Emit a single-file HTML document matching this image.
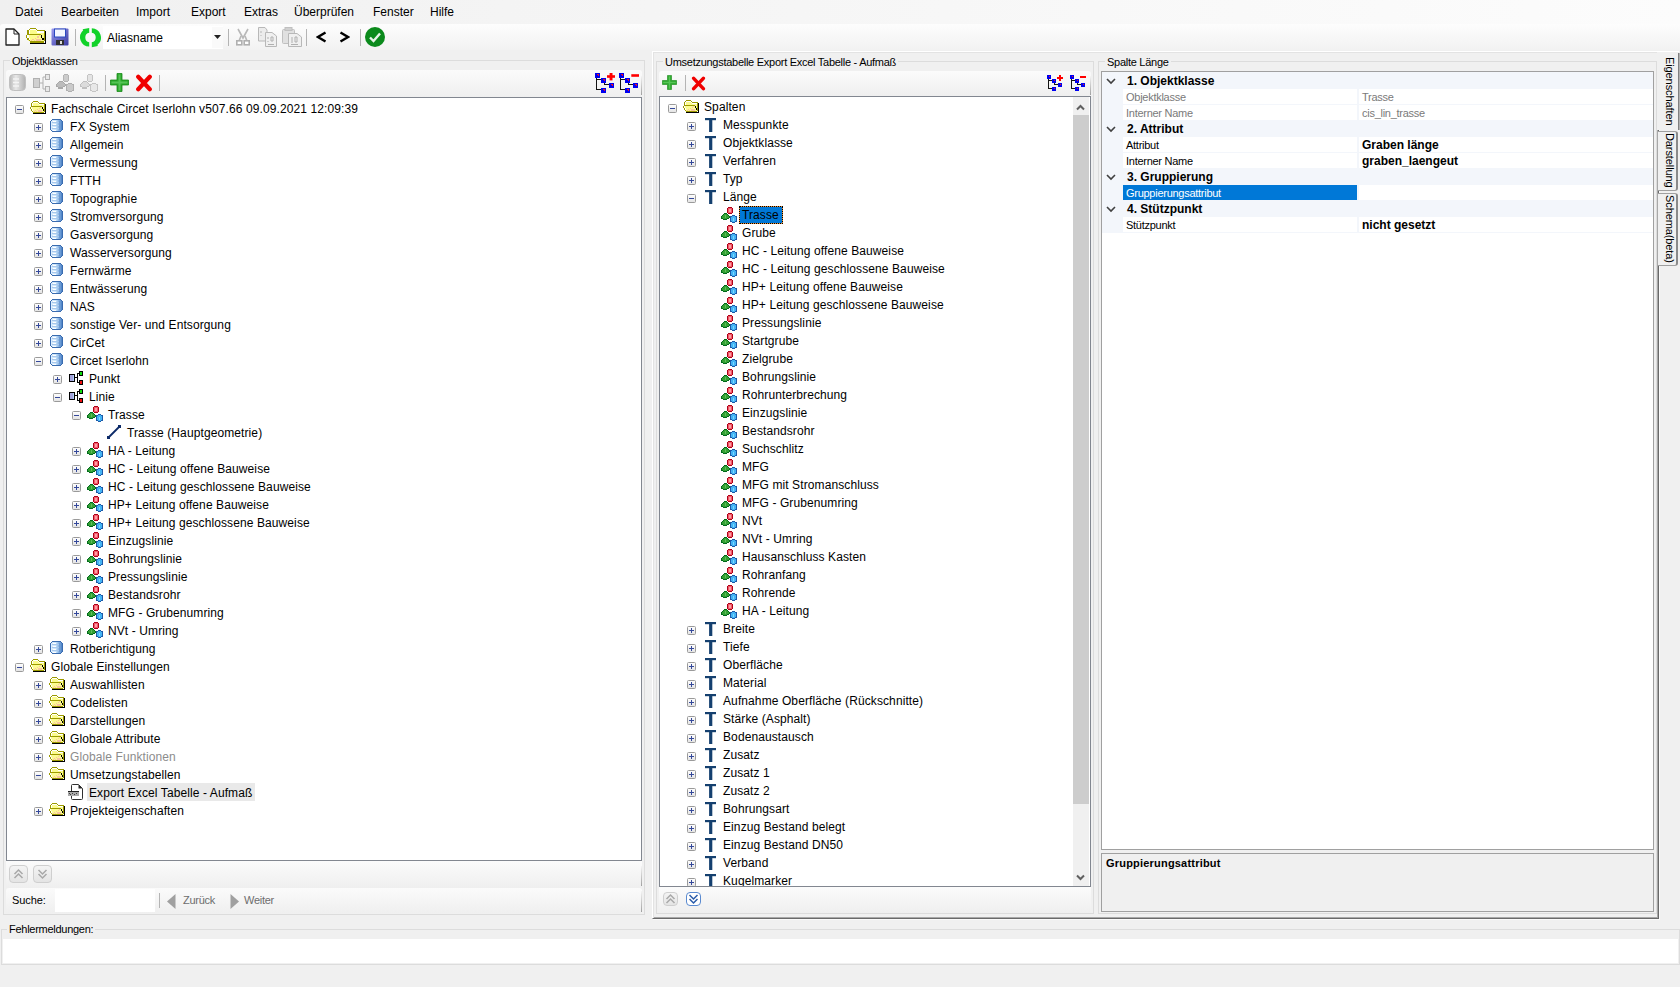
<!DOCTYPE html><html><head><meta charset="utf-8"><style>html,body{margin:0;padding:0;}body{width:1680px;height:987px;position:relative;overflow:hidden;background:#f0f0f0;font-family:'Liberation Sans',sans-serif;color:#000;font-size:12px;}.t{position:absolute;white-space:nowrap;line-height:16px;}.s{font-size:11px;letter-spacing:-0.27px;}.tr{letter-spacing:0.1px;}</style></head><body>
<svg width="0" height="0" style="position:absolute">
<defs>
<linearGradient id="gFold" x1="0" y1="0" x2="0" y2="1"><stop offset="0" stop-color="#fffbb0"/><stop offset="1" stop-color="#f0e060"/></linearGradient>
<linearGradient id="gDb" x1="0" y1="0" x2="1" y2="0"><stop offset="0" stop-color="#3c78c0"/><stop offset="0.35" stop-color="#e8f2ff"/><stop offset="0.7" stop-color="#7aa6d8"/><stop offset="1" stop-color="#3a70b8"/></linearGradient>
<linearGradient id="gExp" x1="0" y1="0" x2="0" y2="1"><stop offset="0" stop-color="#ffffff"/><stop offset="1" stop-color="#e2e2e2"/></linearGradient>
<symbol id="folder" viewBox="0 0 16 16" shape-rendering="crispEdges">
 <path d="M3 3H8V5H14V13H2V4H3Z" fill="#fbfb8c"/>
 <path d="M1 8H12V13H2Z" fill="#fcfc90"/>
 <path d="M3 3H8V4H3Z M2 4H3V7H2Z M9 5H14V6H9Z M1 8H2V10H1Z M2 10H3V12H2Z" fill="#ffffff"/>
 <path d="M7 10H8V11H7Z M9 9H10V10H9Z M5 11H6V12H5Z M8 11H12V13H8Z M10 8H11V9H10Z M4 12H5V13H4Z M6 12H7V13H6Z" fill="#f8c4a0"/>
 <path d="M3 2H8V3H3Z M2 3H3V4H2Z M8 3H9V4H8Z M1 4H2V7H1Z M9 4H15V5H9Z M14 5H15V13H14Z M1 7H12V8H1Z M0 8H1V10H0Z M1 10H2V12H1Z M2 12H3V13H2Z M3 13H14V14H3Z" fill="#9c9a00"/>
 <path d="M15 5H16V15H15Z M3 14H16V15H3Z M12 8H13V10H12Z M13 10H14V12H13Z" fill="#000"/>
</symbol>
<symbol id="db" viewBox="0 0 13 13" shape-rendering="crispEdges">
 <defs><linearGradient id="gDb2" x1="0" y1="0" x2="1" y2="0"><stop offset="0" stop-color="#dceeff"/><stop offset="0.45" stop-color="#c8e4fb"/><stop offset="0.7" stop-color="#8ab4e4"/><stop offset="1" stop-color="#4a80c4"/></linearGradient></defs>
 <path d="M2 0H11V1H12V2H13V11H12V12H11V13H2V12H1V11H0V2H1V1H2Z" fill="#3a6cb0"/>
 <path d="M2 1H11V2H12V11H11V12H2V11H1V2H2Z" fill="url(#gDb2)"/>
 <path d="M3 2H6V3H3Z M3 5H6V6H3Z M3 8H6V9H3Z M3 11H6V12H3Z" fill="#ffffff"/>
 <path d="M2 3H10V4H2Z M2 6H10V7H2Z M2 9H10V10H2Z" fill="#a8c8ec"/>
 <path d="M9 2H11V11H9Z" fill="#6a9ad4"/>
</symbol>
<symbol id="schema" viewBox="0 0 18 16" shape-rendering="crispEdges">
 <path d="M3 4H9V12H3Z" fill="#000"/><path d="M4 5H8V11H4Z" fill="#a4a4dc"/><path d="M7 5H8V11H7Z" fill="#b0d0f8"/>
 <path d="M9 7H11V8H9Z M11 3H12V13H11Z M12 3H13V4H12Z M12 12H13V13H12Z" fill="#000"/>
 <path d="M13 1H17V6H13Z M13 10H17V15H13Z" fill="#000"/>
 <path d="M14 2H16V5H14Z" fill="#10e010"/><path d="M14 11H16V14H14Z" fill="#f01010"/>
</symbol>
<symbol id="objc" viewBox="0 0 17 17" shape-rendering="crispEdges">
 <path d="M7 0H11V1H12V6H11V7H7V6H6V1H7Z" fill="#b00018"/>
 <path d="M7 1H11V6H7Z" fill="#f05a68"/><path d="M8 2H10V5H8Z" fill="#ff9ca4"/>
 <path d="M3 6H6V7H7V8H8V9H9V10H10V11H8V12H6V13H2V12H0V9H1V8H2V7H3Z" fill="#006a1c"/>
 <path d="M3 7H6V8H7V9H8V11H6V12H2V11H1V9H2V8H3Z" fill="#34a034"/><path d="M4 8H5V11H4Z" fill="#5cc05c"/>
 <path d="M11 8H14V9H16V15H14V16H11V15H9V9H11Z" fill="#1e5aa8"/>
 <path d="M11 9H14V10H15V14H14V15H11V14H10V10H11Z" fill="#44b4f4"/><path d="M12 11H13V14H12Z" fill="#80d8ff"/>
</symbol>
<symbol id="objg" viewBox="0 0 17 17" shape-rendering="crispEdges">
 <path d="M7 0H11V1H12V6H11V7H7V6H6V1H7Z" fill="#b4b4b4"/>
 <path d="M7 1H11V6H7Z" fill="#cccccc"/>
 <path d="M3 6H6V7H7V8H8V9H9V10H10V11H8V12H6V13H2V12H0V9H1V8H2V7H3Z" fill="#a8a8a8"/>
 <path d="M3 7H6V8H7V9H8V11H6V12H2V11H1V9H2V8H3Z" fill="#bcbcbc"/>
 <path d="M11 8H14V9H16V15H14V16H11V15H9V9H11Z" fill="#b0b0b0"/>
 <path d="M11 9H14V10H15V14H14V15H11V14H10V10H11Z" fill="#cacaca"/>
</symbol>
<symbol id="objg2" viewBox="0 0 17 17" shape-rendering="crispEdges">
 <path d="M7 0H11V1H12V6H11V7H7V6H6V1H7Z" fill="#c4c4c4"/>
 <path d="M7 1H11V6H7Z" fill="#e4e4e4"/>
 <path d="M3 6H6V7H7V8H8V9H9V10H10V11H8V12H6V13H2V12H0V9H1V8H2V7H3Z" fill="#c0c0c0"/>
 <path d="M3 7H6V8H7V9H8V11H6V12H2V11H1V9H2V8H3Z" fill="#dcdcdc"/>
 <path d="M11 8H14V9H16V15H14V16H11V15H9V9H11Z" fill="#c4c4c4"/>
 <path d="M11 9H14V10H15V14H14V15H11V14H10V10H11Z" fill="#e8e8e8"/>
</symbol>
<symbol id="line" viewBox="0 0 20 20">
 <path d="M4.5 14.5 L15.5 3.5" stroke="#0c2a68" stroke-width="1.8"/>
 <rect x="3" y="13" width="3" height="3" fill="#0c2a68"/><rect x="14" y="2" width="3" height="3" fill="#0c2a68"/>
</symbol>
<symbol id="doc" viewBox="0 0 22 20">
 <path d="M8.5 2.5 H14.5 L18.5 6.5 V16.5 Q18.5 17.5 17.5 17.5 H8.5 Q7.5 17.5 7.5 16.5 V3.5 Q7.5 2.5 8.5 2.5Z" fill="#fff" stroke="#303030" stroke-width="1"/>
 <path d="M14.5 2.5 V6.5 H18.5 Z" fill="#2a2a2a"/>
 <rect x="4" y="9" width="11" height="5" fill="#a8a8a8"/><rect x="4" y="9" width="11" height="1" fill="#202020"/>
 <path d="M5 11H6V12H5Z M8 11H9V12H8Z M10 12H11V13H10Z M6 12H7V13H6Z M12 11H13V12H12Z" fill="#404040"/>
</symbol>
<symbol id="ticon" viewBox="0 0 12 14">
 <rect x="0" y="0" width="11" height="2.2" fill="#15406f"/><rect x="4.1" y="0" width="3.2" height="14" fill="#15406f"/>
</symbol>
<symbol id="plus" viewBox="0 0 9 9">
 <rect x="0.5" y="0.5" width="8" height="8" rx="1" fill="url(#gExp)" stroke="#9a9a9a"/>
 <path d="M2 4.5 H7 M4.5 2 V7" stroke="#34489a" stroke-width="1"/>
</symbol>
<symbol id="minus" viewBox="0 0 9 9">
 <rect x="0.5" y="0.5" width="8" height="8" rx="1" fill="url(#gExp)" stroke="#9a9a9a"/>
 <path d="M2 4.5 H7" stroke="#34489a" stroke-width="1"/>
</symbol>
<symbol id="doc" viewBox="0 0 16 16">
 <path d="M3.5 1.5 H10 L13.5 5 V14.5 H3.5 Z" fill="#fff" stroke="#303030"/>
 <path d="M10 1.5 V5 H13.5" fill="none" stroke="#303030"/>
 <rect x="1" y="7" width="10" height="4" fill="#909090"/>
</symbol>
</defs>
</svg>
<div style="position:absolute;left:0px;top:0px;width:1680px;height:24px;background:linear-gradient(to right,#f0f0f0,#f4f4f4 30%,#fcfcfc);"></div><div class="t" style="left:15px;top:4px;font-size:12px;">Datei</div><div class="t" style="left:61px;top:4px;font-size:12px;">Bearbeiten</div><div class="t" style="left:136px;top:4px;font-size:12px;">Import</div><div class="t" style="left:191px;top:4px;font-size:12px;">Export</div><div class="t" style="left:244px;top:4px;font-size:12px;">Extras</div><div class="t" style="left:294px;top:4px;font-size:12px;">Überprüfen</div><div class="t" style="left:373px;top:4px;font-size:12px;">Fenster</div><div class="t" style="left:430px;top:4px;font-size:12px;">Hilfe</div><div style="position:absolute;left:0px;top:24px;width:1680px;height:26px;background:linear-gradient(#fdfdfd,#f2f2f2);border-radius:3px 0 0 0;"></div><div style="position:absolute;left:652px;top:51px;width:1007px;height:868px;box-sizing:border-box;border-top:1px solid #fff;border-left:1px solid #fff;border-right:1px solid #6a6a6a;border-bottom:1px solid #6a6a6a;box-shadow:inset 1px 1px 0 #e3e3e3, inset -1px -1px 0 #a8a8a8, 1px 1px 0 #fafafa;"></div><div style="position:absolute;left:3px;top:60px;width:642px;height:855px;box-sizing:border-box;border:1px solid #dcdcdc;"></div><div class="t s" style="left:10px;top:53px;padding:0 2px;background:#f0f0f0;">Objektklassen</div><div style="position:absolute;left:656px;top:61px;width:438px;height:853px;box-sizing:border-box;border:1px solid #dcdcdc;"></div><div class="t s" style="left:663px;top:54px;padding:0 2px;background:#f0f0f0;">Umsetzungstabelle Export Excel Tabelle - Aufmaß</div><div style="position:absolute;left:1098px;top:61px;width:559px;height:853px;box-sizing:border-box;border:1px solid #dcdcdc;"></div><div class="t s" style="left:1105px;top:54px;padding:0 2px;background:#f0f0f0;">Spalte Länge</div><div style="position:absolute;left:6px;top:70px;width:636px;height:27px;background:linear-gradient(#fbfbfb,#efefef);border-radius:3px 3px 0 0;"></div><div style="position:absolute;left:641px;top:76px;width:1px;height:19px;background:linear-gradient(#f4f4f4,#a0a0a0);"></div><div style="position:absolute;left:6px;top:97px;width:636px;height:764px;box-sizing:border-box;border:1px solid #828790;background:#fff;"></div><div style="position:absolute;left:6px;top:861px;width:636px;height:27px;background:linear-gradient(#fbfbfb,#efefef);"></div><div style="position:absolute;left:641px;top:866px;width:1px;height:20px;background:linear-gradient(#f4f4f4,#a0a0a0);"></div><div style="position:absolute;left:6px;top:888px;width:636px;height:25px;background:linear-gradient(#fbfbfb,#efefef);border-radius:3px 3px 0 0;"></div><div style="position:absolute;left:55px;top:889px;width:100px;height:23px;background:#fff;"></div><div style="position:absolute;left:641px;top:891px;width:1px;height:21px;background:linear-gradient(#f4f4f4,#a0a0a0);"></div><div style="position:absolute;left:659px;top:71px;width:432px;height:25px;background:linear-gradient(#fbfbfb,#efefef);border-radius:3px 3px 0 0;"></div><div style="position:absolute;left:1090px;top:76px;width:1px;height:19px;background:linear-gradient(#f4f4f4,#a0a0a0);"></div><div style="position:absolute;left:659px;top:96px;width:432px;height:791px;box-sizing:border-box;border:1px solid #828790;background:#fff;"></div><div style="position:absolute;left:659px;top:887px;width:432px;height:26px;background:linear-gradient(#fbfbfb,#efefef);"></div><div style="position:absolute;left:1073px;top:97px;width:16px;height:789px;background:#f0f0f0;"></div><div style="position:absolute;left:1073px;top:115px;width:16px;height:689px;background:#cdcdcd;"></div><div style="position:absolute;left:1101px;top:71px;width:553px;height:779px;box-sizing:border-box;border:1px solid #a0a0a0;background:#fff;"></div><div style="position:absolute;left:1101px;top:853px;width:553px;height:59px;box-sizing:border-box;border:1px solid #a0a0a0;background:#f0f0f0;"></div><div class="t" style="left:1106px;top:855px;font-size:11px;font-weight:bold;letter-spacing:0.2px;">Gruppierungsattribut</div><div style="position:absolute;left:1px;top:929px;width:1679px;height:36px;box-sizing:border-box;border:1px solid #dcdcdc;"></div><div class="t s" style="left:7px;top:921px;padding:0 2px;background:#f0f0f0;">Fehlermeldungen:</div><div style="position:absolute;left:3px;top:939px;width:1675px;height:24px;background:#fff;"></div><svg style="position:absolute;left:5px;top:28px" width="15" height="18" viewBox="0 0 15 18"><path d="M1 1 H9 L14 6 V17 H1 Z" fill="#fff" stroke="#202020" stroke-width="1.3" stroke-linejoin="round"/><path d="M9 1 V6 H14" fill="none" stroke="#202020" stroke-width="1"/></svg><svg style="position:absolute;left:26px;top:25px;" width="20" height="20" viewBox="0 0 20 20"><use href="#folder"/></svg><svg style="position:absolute;left:51px;top:28px" width="18" height="18" viewBox="0 0 18 18"><defs><linearGradient id="gSave" x1="0" y1="0" x2="1" y2="1"><stop offset="0" stop-color="#9a9af0"/><stop offset="1" stop-color="#3a3aa0"/></linearGradient></defs><rect x="0.5" y="0.5" width="17" height="17" rx="1" fill="url(#gSave)"/><rect x="3.5" y="1" width="11" height="8" fill="#f4f6ff" stroke="#2a48c0"/><rect x="5" y="12" width="8" height="5" fill="#303030"/><rect x="9" y="13" width="2" height="3" fill="#ddd"/></svg><div style="position:absolute;left:75px;top:29px;width:1px;height:17px;background:#b4b4b4;"></div><svg style="position:absolute;left:78px;top:25px" width="24" height="24" viewBox="0 0 24 24"><g fill="#12d22a"><path d="M11.2 3 V7.7 A4.9 4.9 0 0 0 11.2 17.3 V21.6 A9.4 9.4 0 0 1 5.2 5.2 L4.6 4.2 Z"/><path d="M13.8 3.3 A9.3 9.3 0 0 1 19.5 19.8 L19.8 21 L13.8 22.2 V17.3 A4.9 4.9 0 0 0 13.8 7.7 Z"/></g></svg><div style="position:absolute;left:103px;top:26px;width:120px;height:23px;background:#fff;"></div><div style="position:absolute;left:212px;top:27px;width:11px;height:21px;background:#fafafa;"></div><svg style="position:absolute;left:214px;top:35px" width="7" height="4" viewBox="0 0 7 4"><path d="M0 0 H7 L3.5 4 Z" fill="#222"/></svg><div class="t" style="left:107px;top:30px;">Aliasname</div><div style="position:absolute;left:228px;top:29px;width:1px;height:17px;background:#b4b4b4;"></div><svg style="position:absolute;left:236px;top:28px" width="14" height="18" viewBox="0 0 14 18"><path d="M2 1 L7 10 L12 1" fill="none" stroke="#b8b8b8" stroke-width="1.6"/><path d="M5 8 L3 13 M9 8 L11 13" stroke="#b8b8b8" stroke-width="1.6"/><rect x="0.8" y="12.8" width="5" height="4" fill="#fff" stroke="#b0b0b0" stroke-width="1.6"/><rect x="8.2" y="12.8" width="5" height="4" fill="#fff" stroke="#b0b0b0" stroke-width="1.6"/></svg><svg style="position:absolute;left:258px;top:27px" width="19" height="20" viewBox="0 0 19 20"><path d="M0.5 0.5 H7 L9 3 V14 H0.5 Z" fill="#ececec" stroke="#b8b8b8"/><path d="M7.5 5.5 H14 L18.5 9 V19.5 H7.5 Z" fill="#f0f0f0" stroke="#b8b8b8"/><path d="M10 10 V12 M10 14 V15 M13 10 H15 V14 H13 Z M10 17.5 H16" stroke="#b0b0b0" fill="none"/><path d="M3 4 V6 M3 8 V9" stroke="#b8b8b8"/></svg><svg style="position:absolute;left:282px;top:27px" width="20" height="20" viewBox="0 0 20 20"><rect x="0.5" y="2.5" width="12" height="14" rx="1" fill="#e0e0e0" stroke="#c0c0c0"/><rect x="3" y="0.5" width="7" height="3" fill="#d0d0d0" stroke="#c0c0c0"/><path d="M6.5 6.5 H15 L19.5 10 V19.5 H6.5 Z" fill="#f0f0f0" stroke="#b8b8b8"/><path d="M9 11 H11 M9 13 H11 M9 15 H11 M13 10 H15 V15 H13 Z M9 17.5 H16" stroke="#b0b0b0" fill="none"/></svg><div style="position:absolute;left:306px;top:29px;width:1px;height:17px;background:#b4b4b4;"></div><svg style="position:absolute;left:316px;top:31px" width="11" height="12" viewBox="0 0 11 12"><path d="M9.5 1.5 L2 6 L9.5 10.5" fill="none" stroke="#000" stroke-width="2.4" stroke-linejoin="miter"/></svg><svg style="position:absolute;left:339px;top:31px" width="11" height="12" viewBox="0 0 11 12"><path d="M1.5 1.5 L9 6 L1.5 10.5" fill="none" stroke="#000" stroke-width="2.4" stroke-linejoin="miter"/></svg><div style="position:absolute;left:360px;top:29px;width:1px;height:17px;background:#b4b4b4;"></div><svg style="position:absolute;left:364px;top:26px" width="22" height="22" viewBox="0 0 22 22"><circle cx="11" cy="11" r="10" fill="#0b8a1c"/><path d="M6 11.5 L9.5 15 L16 7.5" fill="none" stroke="#e8f4e8" stroke-width="2.4"/></svg><svg style="position:absolute;left:9px;top:74px" width="17" height="17" viewBox="0 0 17 17"><defs><linearGradient id="gGdb" x1="0" y1="0" x2="1" y2="0"><stop offset="0" stop-color="#b8b8b8"/><stop offset="0.4" stop-color="#e8e8e8"/><stop offset="1" stop-color="#b0b0b0"/></linearGradient></defs><rect x="0.5" y="0.5" width="16" height="16" rx="4" fill="url(#gGdb)" stroke="#c0c0c0"/><path d="M4 5 H10 M4 8.5 H10 M4 12 H10" stroke="#f4f4f4" stroke-width="1.3"/></svg><svg style="position:absolute;left:33px;top:74px" width="18" height="18" viewBox="0 0 18 18"><rect x="0.5" y="4.5" width="6" height="9" fill="#d0d0d0" stroke="#b0b0b0"/><path d="M6.5 9 H10 M10 3 V15 M10 3 H13 M10 15 H13" stroke="#b0b0b0" fill="none"/><rect x="12.5" y="0.5" width="4" height="5" fill="#e8e8e8" stroke="#b0b0b0"/><rect x="12.5" y="12.5" width="4" height="5" fill="#e8e8e8" stroke="#b0b0b0"/></svg><svg style="position:absolute;left:56px;top:74px;" width="19" height="19" viewBox="0 0 19 19"><use href="#objg"/></svg><svg style="position:absolute;left:80px;top:74px;" width="19" height="19" viewBox="0 0 19 19"><use href="#objg2"/></svg><div style="position:absolute;left:105px;top:75px;width:1px;height:16px;background:#b4b4b4;"></div><svg style="position:absolute;left:110px;top:73px" width="19" height="19" viewBox="0 0 19 19"><path d="M7 0.5 H12 V7 H18.5 V12 H12 V18.5 H7 V12 H0.5 V7 H7 Z" fill="#2aa82a" stroke="#1a8a1a" stroke-width="0.8"/><path d="M8.5 1.5 H10.5 V8.5 H17.5 V10.5 H10.5 V17.5 H8.5 V10.5 H1.5 V8.5 H8.5 Z" fill="#7ad87a" opacity="0.55"/></svg><svg style="position:absolute;left:135px;top:74px" width="18" height="18" viewBox="0 0 18 18"><path d="M3.2 2.8 L14.8 15.2 M14.8 2.8 L3.2 15.2" stroke="#f00000" stroke-width="4.2" stroke-linecap="round"/></svg><div style="position:absolute;left:159px;top:75px;width:1px;height:16px;background:#b4b4b4;"></div><svg style="position:absolute;left:595px;top:73px" width="20" height="20" viewBox="0 0 20 20"><g shape-rendering="crispEdges"><path d="M1 5H2V17H1Z M2 6H6V7H2Z M2 16H6V17H2Z M9 10H10V12H9Z M10 11H14V12H10Z" fill="#141414"/><rect x="0" y="0" width="5" height="5" fill="#0000f0"/><path d="M1 1H4V4Z" fill="#e8102a"/><rect x="6" y="5" width="5" height="5" fill="#0000f0"/><path d="M7 6H10V9Z" fill="#e8102a"/><rect x="14" y="10" width="5" height="5" fill="#0000f0"/><path d="M15 11H18V14Z" fill="#e8102a"/><rect x="6" y="15" width="5" height="5" fill="#0000f0"/><path d="M7 16H10V19Z" fill="#e8102a"/></g><rect x="12" y="2.2" width="8" height="2.6" fill="#ff0000"/><rect x="14.6" y="0" width="2.9" height="7.4" fill="#ff0000"/></svg><svg style="position:absolute;left:619px;top:73px" width="20" height="20" viewBox="0 0 20 20"><g shape-rendering="crispEdges"><path d="M1 5H2V17H1Z M2 6H6V7H2Z M2 16H6V17H2Z M9 10H10V12H9Z M10 11H14V12H10Z" fill="#141414"/><rect x="0" y="0" width="5" height="5" fill="#0000f0"/><path d="M1 1H4V4Z" fill="#e8102a"/><rect x="6" y="5" width="5" height="5" fill="#0000f0"/><path d="M7 6H10V9Z" fill="#e8102a"/><rect x="14" y="10" width="5" height="5" fill="#0000f0"/><path d="M15 11H18V14Z" fill="#e8102a"/><rect x="6" y="15" width="5" height="5" fill="#0000f0"/><path d="M7 16H10V19Z" fill="#e8102a"/></g><rect x="12.3" y="1.2" width="7.7" height="2.6" fill="#ff0000"/></svg><svg style="position:absolute;left:662px;top:75px" width="15" height="15" viewBox="0 0 19 19"><path d="M7 0.5 H12 V7 H18.5 V12 H12 V18.5 H7 V12 H0.5 V7 H7 Z" fill="#2aa82a" stroke="#1a8a1a" stroke-width="0.8"/><path d="M8.5 1.5 H10.5 V8.5 H17.5 V10.5 H10.5 V17.5 H8.5 V10.5 H1.5 V8.5 H8.5 Z" fill="#7ad87a" opacity="0.55"/></svg><div style="position:absolute;left:685px;top:75px;width:1px;height:16px;background:#b4b4b4;"></div><svg style="position:absolute;left:691px;top:76px" width="15" height="15" viewBox="0 0 18 18"><path d="M3.2 2.8 L14.8 15.2 M14.8 2.8 L3.2 15.2" stroke="#f00000" stroke-width="4.2" stroke-linecap="round"/></svg><svg style="position:absolute;left:1047px;top:75px" width="16" height="16" viewBox="0 0 16 16"><g shape-rendering="crispEdges"><path d="M1 4H2V14H1Z M2 5H5V6H2Z M2 13H5V14H2Z M7 8H8V10H7Z M8 9H11V10H8Z" fill="#141414"/><rect x="0" y="0" width="4" height="4" fill="#0000f0"/><path d="M1 1H3V3Z" fill="#e8102a"/><rect x="5" y="4" width="4" height="4" fill="#0000f0"/><path d="M6 5H8V7Z" fill="#e8102a"/><rect x="11" y="8" width="4" height="4" fill="#0000f0"/><path d="M12 9H14V11Z" fill="#e8102a"/><rect x="5" y="12" width="4" height="4" fill="#0000f0"/><path d="M6 13H8V15Z" fill="#e8102a"/><rect x="10" y="2" width="6" height="2" fill="#ff0000"/><rect x="12" y="0" width="2" height="6" fill="#ff0000"/></g></svg><svg style="position:absolute;left:1070px;top:75px" width="16" height="16" viewBox="0 0 16 16"><g shape-rendering="crispEdges"><path d="M1 4H2V14H1Z M2 5H5V6H2Z M2 13H5V14H2Z M7 8H8V10H7Z M8 9H11V10H8Z" fill="#141414"/><rect x="0" y="0" width="4" height="4" fill="#0000f0"/><path d="M1 1H3V3Z" fill="#e8102a"/><rect x="5" y="4" width="4" height="4" fill="#0000f0"/><path d="M6 5H8V7Z" fill="#e8102a"/><rect x="11" y="8" width="4" height="4" fill="#0000f0"/><path d="M12 9H14V11Z" fill="#e8102a"/><rect x="5" y="12" width="4" height="4" fill="#0000f0"/><path d="M6 13H8V15Z" fill="#e8102a"/><rect x="10" y="1" width="6" height="2" fill="#ff0000"/></g></svg><svg style="position:absolute;left:15px;top:105px;" width="9" height="9" viewBox="0 0 9 9"><use href="#minus"/></svg><svg style="position:absolute;left:30px;top:99px;" width="16" height="16" viewBox="0 0 16 16"><use href="#folder"/></svg><div class="t tr" style="left:51px;top:101px;">Fachschale Circet Iserlohn v507.66 09.09.2021 12:09:39</div><svg style="position:absolute;left:34px;top:123px;" width="9" height="9" viewBox="0 0 9 9"><use href="#plus"/></svg><svg style="position:absolute;left:50px;top:119px;" width="13" height="13" viewBox="0 0 13 13"><use href="#db"/></svg><div class="t tr" style="left:70px;top:119px;">FX System</div><svg style="position:absolute;left:34px;top:141px;" width="9" height="9" viewBox="0 0 9 9"><use href="#plus"/></svg><svg style="position:absolute;left:50px;top:137px;" width="13" height="13" viewBox="0 0 13 13"><use href="#db"/></svg><div class="t tr" style="left:70px;top:137px;">Allgemein</div><svg style="position:absolute;left:34px;top:159px;" width="9" height="9" viewBox="0 0 9 9"><use href="#plus"/></svg><svg style="position:absolute;left:50px;top:155px;" width="13" height="13" viewBox="0 0 13 13"><use href="#db"/></svg><div class="t tr" style="left:70px;top:155px;">Vermessung</div><svg style="position:absolute;left:34px;top:177px;" width="9" height="9" viewBox="0 0 9 9"><use href="#plus"/></svg><svg style="position:absolute;left:50px;top:173px;" width="13" height="13" viewBox="0 0 13 13"><use href="#db"/></svg><div class="t tr" style="left:70px;top:173px;">FTTH</div><svg style="position:absolute;left:34px;top:195px;" width="9" height="9" viewBox="0 0 9 9"><use href="#plus"/></svg><svg style="position:absolute;left:50px;top:191px;" width="13" height="13" viewBox="0 0 13 13"><use href="#db"/></svg><div class="t tr" style="left:70px;top:191px;">Topographie</div><svg style="position:absolute;left:34px;top:213px;" width="9" height="9" viewBox="0 0 9 9"><use href="#plus"/></svg><svg style="position:absolute;left:50px;top:209px;" width="13" height="13" viewBox="0 0 13 13"><use href="#db"/></svg><div class="t tr" style="left:70px;top:209px;">Stromversorgung</div><svg style="position:absolute;left:34px;top:231px;" width="9" height="9" viewBox="0 0 9 9"><use href="#plus"/></svg><svg style="position:absolute;left:50px;top:227px;" width="13" height="13" viewBox="0 0 13 13"><use href="#db"/></svg><div class="t tr" style="left:70px;top:227px;">Gasversorgung</div><svg style="position:absolute;left:34px;top:249px;" width="9" height="9" viewBox="0 0 9 9"><use href="#plus"/></svg><svg style="position:absolute;left:50px;top:245px;" width="13" height="13" viewBox="0 0 13 13"><use href="#db"/></svg><div class="t tr" style="left:70px;top:245px;">Wasserversorgung</div><svg style="position:absolute;left:34px;top:267px;" width="9" height="9" viewBox="0 0 9 9"><use href="#plus"/></svg><svg style="position:absolute;left:50px;top:263px;" width="13" height="13" viewBox="0 0 13 13"><use href="#db"/></svg><div class="t tr" style="left:70px;top:263px;">Fernwärme</div><svg style="position:absolute;left:34px;top:285px;" width="9" height="9" viewBox="0 0 9 9"><use href="#plus"/></svg><svg style="position:absolute;left:50px;top:281px;" width="13" height="13" viewBox="0 0 13 13"><use href="#db"/></svg><div class="t tr" style="left:70px;top:281px;">Entwässerung</div><svg style="position:absolute;left:34px;top:303px;" width="9" height="9" viewBox="0 0 9 9"><use href="#plus"/></svg><svg style="position:absolute;left:50px;top:299px;" width="13" height="13" viewBox="0 0 13 13"><use href="#db"/></svg><div class="t tr" style="left:70px;top:299px;">NAS</div><svg style="position:absolute;left:34px;top:321px;" width="9" height="9" viewBox="0 0 9 9"><use href="#plus"/></svg><svg style="position:absolute;left:50px;top:317px;" width="13" height="13" viewBox="0 0 13 13"><use href="#db"/></svg><div class="t tr" style="left:70px;top:317px;">sonstige Ver- und Entsorgung</div><svg style="position:absolute;left:34px;top:339px;" width="9" height="9" viewBox="0 0 9 9"><use href="#plus"/></svg><svg style="position:absolute;left:50px;top:335px;" width="13" height="13" viewBox="0 0 13 13"><use href="#db"/></svg><div class="t tr" style="left:70px;top:335px;">CirCet</div><svg style="position:absolute;left:34px;top:357px;" width="9" height="9" viewBox="0 0 9 9"><use href="#minus"/></svg><svg style="position:absolute;left:50px;top:353px;" width="13" height="13" viewBox="0 0 13 13"><use href="#db"/></svg><div class="t tr" style="left:70px;top:353px;">Circet Iserlohn</div><svg style="position:absolute;left:53px;top:375px;" width="9" height="9" viewBox="0 0 9 9"><use href="#plus"/></svg><svg style="position:absolute;left:66px;top:370px;" width="18" height="16" viewBox="0 0 18 16"><use href="#schema"/></svg><div class="t tr" style="left:89px;top:371px;">Punkt</div><svg style="position:absolute;left:53px;top:393px;" width="9" height="9" viewBox="0 0 9 9"><use href="#minus"/></svg><svg style="position:absolute;left:66px;top:388px;" width="18" height="16" viewBox="0 0 18 16"><use href="#schema"/></svg><div class="t tr" style="left:89px;top:389px;">Linie</div><svg style="position:absolute;left:72px;top:411px;" width="9" height="9" viewBox="0 0 9 9"><use href="#minus"/></svg><svg style="position:absolute;left:87px;top:406px;" width="17" height="17" viewBox="0 0 17 17"><use href="#objc"/></svg><div class="t tr" style="left:108px;top:407px;">Trasse</div><svg style="position:absolute;left:104px;top:423px;" width="20" height="20" viewBox="0 0 20 20"><use href="#line"/></svg><div class="t tr" style="left:127px;top:425px;">Trasse (Hauptgeometrie)</div><svg style="position:absolute;left:72px;top:447px;" width="9" height="9" viewBox="0 0 9 9"><use href="#plus"/></svg><svg style="position:absolute;left:87px;top:442px;" width="17" height="17" viewBox="0 0 17 17"><use href="#objc"/></svg><div class="t tr" style="left:108px;top:443px;">HA - Leitung</div><svg style="position:absolute;left:72px;top:465px;" width="9" height="9" viewBox="0 0 9 9"><use href="#plus"/></svg><svg style="position:absolute;left:87px;top:460px;" width="17" height="17" viewBox="0 0 17 17"><use href="#objc"/></svg><div class="t tr" style="left:108px;top:461px;">HC - Leitung offene Bauweise</div><svg style="position:absolute;left:72px;top:483px;" width="9" height="9" viewBox="0 0 9 9"><use href="#plus"/></svg><svg style="position:absolute;left:87px;top:478px;" width="17" height="17" viewBox="0 0 17 17"><use href="#objc"/></svg><div class="t tr" style="left:108px;top:479px;">HC - Leitung geschlossene Bauweise</div><svg style="position:absolute;left:72px;top:501px;" width="9" height="9" viewBox="0 0 9 9"><use href="#plus"/></svg><svg style="position:absolute;left:87px;top:496px;" width="17" height="17" viewBox="0 0 17 17"><use href="#objc"/></svg><div class="t tr" style="left:108px;top:497px;">HP+ Leitung offene Bauweise</div><svg style="position:absolute;left:72px;top:519px;" width="9" height="9" viewBox="0 0 9 9"><use href="#plus"/></svg><svg style="position:absolute;left:87px;top:514px;" width="17" height="17" viewBox="0 0 17 17"><use href="#objc"/></svg><div class="t tr" style="left:108px;top:515px;">HP+ Leitung geschlossene Bauweise</div><svg style="position:absolute;left:72px;top:537px;" width="9" height="9" viewBox="0 0 9 9"><use href="#plus"/></svg><svg style="position:absolute;left:87px;top:532px;" width="17" height="17" viewBox="0 0 17 17"><use href="#objc"/></svg><div class="t tr" style="left:108px;top:533px;">Einzugslinie</div><svg style="position:absolute;left:72px;top:555px;" width="9" height="9" viewBox="0 0 9 9"><use href="#plus"/></svg><svg style="position:absolute;left:87px;top:550px;" width="17" height="17" viewBox="0 0 17 17"><use href="#objc"/></svg><div class="t tr" style="left:108px;top:551px;">Bohrungslinie</div><svg style="position:absolute;left:72px;top:573px;" width="9" height="9" viewBox="0 0 9 9"><use href="#plus"/></svg><svg style="position:absolute;left:87px;top:568px;" width="17" height="17" viewBox="0 0 17 17"><use href="#objc"/></svg><div class="t tr" style="left:108px;top:569px;">Pressungslinie</div><svg style="position:absolute;left:72px;top:591px;" width="9" height="9" viewBox="0 0 9 9"><use href="#plus"/></svg><svg style="position:absolute;left:87px;top:586px;" width="17" height="17" viewBox="0 0 17 17"><use href="#objc"/></svg><div class="t tr" style="left:108px;top:587px;">Bestandsrohr</div><svg style="position:absolute;left:72px;top:609px;" width="9" height="9" viewBox="0 0 9 9"><use href="#plus"/></svg><svg style="position:absolute;left:87px;top:604px;" width="17" height="17" viewBox="0 0 17 17"><use href="#objc"/></svg><div class="t tr" style="left:108px;top:605px;">MFG - Grubenumring</div><svg style="position:absolute;left:72px;top:627px;" width="9" height="9" viewBox="0 0 9 9"><use href="#plus"/></svg><svg style="position:absolute;left:87px;top:622px;" width="17" height="17" viewBox="0 0 17 17"><use href="#objc"/></svg><div class="t tr" style="left:108px;top:623px;">NVt - Umring</div><svg style="position:absolute;left:34px;top:645px;" width="9" height="9" viewBox="0 0 9 9"><use href="#plus"/></svg><svg style="position:absolute;left:50px;top:641px;" width="13" height="13" viewBox="0 0 13 13"><use href="#db"/></svg><div class="t tr" style="left:70px;top:641px;">Rotberichtigung</div><svg style="position:absolute;left:15px;top:663px;" width="9" height="9" viewBox="0 0 9 9"><use href="#minus"/></svg><svg style="position:absolute;left:30px;top:657px;" width="16" height="16" viewBox="0 0 16 16"><use href="#folder"/></svg><div class="t tr" style="left:51px;top:659px;">Globale Einstellungen</div><svg style="position:absolute;left:34px;top:681px;" width="9" height="9" viewBox="0 0 9 9"><use href="#plus"/></svg><svg style="position:absolute;left:49px;top:675px;" width="16" height="16" viewBox="0 0 16 16"><use href="#folder"/></svg><div class="t tr" style="left:70px;top:677px;">Auswahllisten</div><svg style="position:absolute;left:34px;top:699px;" width="9" height="9" viewBox="0 0 9 9"><use href="#plus"/></svg><svg style="position:absolute;left:49px;top:693px;" width="16" height="16" viewBox="0 0 16 16"><use href="#folder"/></svg><div class="t tr" style="left:70px;top:695px;">Codelisten</div><svg style="position:absolute;left:34px;top:717px;" width="9" height="9" viewBox="0 0 9 9"><use href="#plus"/></svg><svg style="position:absolute;left:49px;top:711px;" width="16" height="16" viewBox="0 0 16 16"><use href="#folder"/></svg><div class="t tr" style="left:70px;top:713px;">Darstellungen</div><svg style="position:absolute;left:34px;top:735px;" width="9" height="9" viewBox="0 0 9 9"><use href="#plus"/></svg><svg style="position:absolute;left:49px;top:729px;" width="16" height="16" viewBox="0 0 16 16"><use href="#folder"/></svg><div class="t tr" style="left:70px;top:731px;">Globale Attribute</div><svg style="position:absolute;left:34px;top:753px;" width="9" height="9" viewBox="0 0 9 9"><use href="#plus"/></svg><svg style="position:absolute;left:49px;top:747px;" width="16" height="16" viewBox="0 0 16 16"><use href="#folder"/></svg><div class="t tr" style="left:70px;top:749px;color:#8c8c8c;">Globale Funktionen</div><svg style="position:absolute;left:34px;top:771px;" width="9" height="9" viewBox="0 0 9 9"><use href="#minus"/></svg><svg style="position:absolute;left:49px;top:765px;" width="16" height="16" viewBox="0 0 16 16"><use href="#folder"/></svg><div class="t tr" style="left:70px;top:767px;">Umsetzungstabellen</div><svg style="position:absolute;left:64px;top:782px;" width="22" height="20" viewBox="0 0 22 20"><use href="#doc"/></svg><div style="position:absolute;left:87px;top:783px;width:168px;height:18px;background:#e9e9e9;"></div><div class="t tr" style="left:89px;top:785px;">Export Excel Tabelle - Aufmaß</div><svg style="position:absolute;left:34px;top:807px;" width="9" height="9" viewBox="0 0 9 9"><use href="#plus"/></svg><svg style="position:absolute;left:49px;top:801px;" width="16" height="16" viewBox="0 0 16 16"><use href="#folder"/></svg><div class="t tr" style="left:70px;top:803px;">Projekteigenschaften</div><div style="position:absolute;left:660px;top:98px;width:413px;height:788px;overflow:hidden;"><svg style="position:absolute;left:8px;top:6px;" width="9" height="9" viewBox="0 0 9 9"><use href="#minus"/></svg><svg style="position:absolute;left:23px;top:0px;" width="16" height="16" viewBox="0 0 16 16"><use href="#folder"/></svg><div class="t tr" style="left:44px;top:1px;">Spalten</div><svg style="position:absolute;left:27px;top:24px;" width="9" height="9" viewBox="0 0 9 9"><use href="#plus"/></svg><svg style="position:absolute;left:45px;top:20px;" width="12" height="14" viewBox="0 0 12 14"><use href="#ticon"/></svg><div class="t tr" style="left:63px;top:19px;">Messpunkte</div><svg style="position:absolute;left:27px;top:42px;" width="9" height="9" viewBox="0 0 9 9"><use href="#plus"/></svg><svg style="position:absolute;left:45px;top:38px;" width="12" height="14" viewBox="0 0 12 14"><use href="#ticon"/></svg><div class="t tr" style="left:63px;top:37px;">Objektklasse</div><svg style="position:absolute;left:27px;top:60px;" width="9" height="9" viewBox="0 0 9 9"><use href="#plus"/></svg><svg style="position:absolute;left:45px;top:56px;" width="12" height="14" viewBox="0 0 12 14"><use href="#ticon"/></svg><div class="t tr" style="left:63px;top:55px;">Verfahren</div><svg style="position:absolute;left:27px;top:78px;" width="9" height="9" viewBox="0 0 9 9"><use href="#plus"/></svg><svg style="position:absolute;left:45px;top:74px;" width="12" height="14" viewBox="0 0 12 14"><use href="#ticon"/></svg><div class="t tr" style="left:63px;top:73px;">Typ</div><svg style="position:absolute;left:27px;top:96px;" width="9" height="9" viewBox="0 0 9 9"><use href="#minus"/></svg><svg style="position:absolute;left:45px;top:92px;" width="12" height="14" viewBox="0 0 12 14"><use href="#ticon"/></svg><div class="t tr" style="left:63px;top:91px;">Länge</div><svg style="position:absolute;left:61px;top:109px;" width="17" height="17" viewBox="0 0 17 17"><use href="#objc"/></svg><div style="position:absolute;left:79px;top:108px;width:44px;height:18px;box-sizing:border-box;background:#0078d7;border:1px solid #f09030;outline:1px dotted #000;outline-offset:-1px;"></div><div class="t tr" style="left:82px;top:109px;">Trasse</div><svg style="position:absolute;left:61px;top:127px;" width="17" height="17" viewBox="0 0 17 17"><use href="#objc"/></svg><div class="t tr" style="left:82px;top:127px;">Grube</div><svg style="position:absolute;left:61px;top:145px;" width="17" height="17" viewBox="0 0 17 17"><use href="#objc"/></svg><div class="t tr" style="left:82px;top:145px;">HC - Leitung offene Bauweise</div><svg style="position:absolute;left:61px;top:163px;" width="17" height="17" viewBox="0 0 17 17"><use href="#objc"/></svg><div class="t tr" style="left:82px;top:163px;">HC - Leitung geschlossene Bauweise</div><svg style="position:absolute;left:61px;top:181px;" width="17" height="17" viewBox="0 0 17 17"><use href="#objc"/></svg><div class="t tr" style="left:82px;top:181px;">HP+ Leitung offene Bauweise</div><svg style="position:absolute;left:61px;top:199px;" width="17" height="17" viewBox="0 0 17 17"><use href="#objc"/></svg><div class="t tr" style="left:82px;top:199px;">HP+ Leitung geschlossene Bauweise</div><svg style="position:absolute;left:61px;top:217px;" width="17" height="17" viewBox="0 0 17 17"><use href="#objc"/></svg><div class="t tr" style="left:82px;top:217px;">Pressungslinie</div><svg style="position:absolute;left:61px;top:235px;" width="17" height="17" viewBox="0 0 17 17"><use href="#objc"/></svg><div class="t tr" style="left:82px;top:235px;">Startgrube</div><svg style="position:absolute;left:61px;top:253px;" width="17" height="17" viewBox="0 0 17 17"><use href="#objc"/></svg><div class="t tr" style="left:82px;top:253px;">Zielgrube</div><svg style="position:absolute;left:61px;top:271px;" width="17" height="17" viewBox="0 0 17 17"><use href="#objc"/></svg><div class="t tr" style="left:82px;top:271px;">Bohrungslinie</div><svg style="position:absolute;left:61px;top:289px;" width="17" height="17" viewBox="0 0 17 17"><use href="#objc"/></svg><div class="t tr" style="left:82px;top:289px;">Rohrunterbrechung</div><svg style="position:absolute;left:61px;top:307px;" width="17" height="17" viewBox="0 0 17 17"><use href="#objc"/></svg><div class="t tr" style="left:82px;top:307px;">Einzugslinie</div><svg style="position:absolute;left:61px;top:325px;" width="17" height="17" viewBox="0 0 17 17"><use href="#objc"/></svg><div class="t tr" style="left:82px;top:325px;">Bestandsrohr</div><svg style="position:absolute;left:61px;top:343px;" width="17" height="17" viewBox="0 0 17 17"><use href="#objc"/></svg><div class="t tr" style="left:82px;top:343px;">Suchschlitz</div><svg style="position:absolute;left:61px;top:361px;" width="17" height="17" viewBox="0 0 17 17"><use href="#objc"/></svg><div class="t tr" style="left:82px;top:361px;">MFG</div><svg style="position:absolute;left:61px;top:379px;" width="17" height="17" viewBox="0 0 17 17"><use href="#objc"/></svg><div class="t tr" style="left:82px;top:379px;">MFG mit Stromanschluss</div><svg style="position:absolute;left:61px;top:397px;" width="17" height="17" viewBox="0 0 17 17"><use href="#objc"/></svg><div class="t tr" style="left:82px;top:397px;">MFG - Grubenumring</div><svg style="position:absolute;left:61px;top:415px;" width="17" height="17" viewBox="0 0 17 17"><use href="#objc"/></svg><div class="t tr" style="left:82px;top:415px;">NVt</div><svg style="position:absolute;left:61px;top:433px;" width="17" height="17" viewBox="0 0 17 17"><use href="#objc"/></svg><div class="t tr" style="left:82px;top:433px;">NVt - Umring</div><svg style="position:absolute;left:61px;top:451px;" width="17" height="17" viewBox="0 0 17 17"><use href="#objc"/></svg><div class="t tr" style="left:82px;top:451px;">Hausanschluss Kasten</div><svg style="position:absolute;left:61px;top:469px;" width="17" height="17" viewBox="0 0 17 17"><use href="#objc"/></svg><div class="t tr" style="left:82px;top:469px;">Rohranfang</div><svg style="position:absolute;left:61px;top:487px;" width="17" height="17" viewBox="0 0 17 17"><use href="#objc"/></svg><div class="t tr" style="left:82px;top:487px;">Rohrende</div><svg style="position:absolute;left:61px;top:505px;" width="17" height="17" viewBox="0 0 17 17"><use href="#objc"/></svg><div class="t tr" style="left:82px;top:505px;">HA - Leitung</div><svg style="position:absolute;left:27px;top:528px;" width="9" height="9" viewBox="0 0 9 9"><use href="#plus"/></svg><svg style="position:absolute;left:45px;top:524px;" width="12" height="14" viewBox="0 0 12 14"><use href="#ticon"/></svg><div class="t tr" style="left:63px;top:523px;">Breite</div><svg style="position:absolute;left:27px;top:546px;" width="9" height="9" viewBox="0 0 9 9"><use href="#plus"/></svg><svg style="position:absolute;left:45px;top:542px;" width="12" height="14" viewBox="0 0 12 14"><use href="#ticon"/></svg><div class="t tr" style="left:63px;top:541px;">Tiefe</div><svg style="position:absolute;left:27px;top:564px;" width="9" height="9" viewBox="0 0 9 9"><use href="#plus"/></svg><svg style="position:absolute;left:45px;top:560px;" width="12" height="14" viewBox="0 0 12 14"><use href="#ticon"/></svg><div class="t tr" style="left:63px;top:559px;">Oberfläche</div><svg style="position:absolute;left:27px;top:582px;" width="9" height="9" viewBox="0 0 9 9"><use href="#plus"/></svg><svg style="position:absolute;left:45px;top:578px;" width="12" height="14" viewBox="0 0 12 14"><use href="#ticon"/></svg><div class="t tr" style="left:63px;top:577px;">Material</div><svg style="position:absolute;left:27px;top:600px;" width="9" height="9" viewBox="0 0 9 9"><use href="#plus"/></svg><svg style="position:absolute;left:45px;top:596px;" width="12" height="14" viewBox="0 0 12 14"><use href="#ticon"/></svg><div class="t tr" style="left:63px;top:595px;">Aufnahme Oberfläche (Rückschnitte)</div><svg style="position:absolute;left:27px;top:618px;" width="9" height="9" viewBox="0 0 9 9"><use href="#plus"/></svg><svg style="position:absolute;left:45px;top:614px;" width="12" height="14" viewBox="0 0 12 14"><use href="#ticon"/></svg><div class="t tr" style="left:63px;top:613px;">Stärke (Asphalt)</div><svg style="position:absolute;left:27px;top:636px;" width="9" height="9" viewBox="0 0 9 9"><use href="#plus"/></svg><svg style="position:absolute;left:45px;top:632px;" width="12" height="14" viewBox="0 0 12 14"><use href="#ticon"/></svg><div class="t tr" style="left:63px;top:631px;">Bodenaustausch</div><svg style="position:absolute;left:27px;top:654px;" width="9" height="9" viewBox="0 0 9 9"><use href="#plus"/></svg><svg style="position:absolute;left:45px;top:650px;" width="12" height="14" viewBox="0 0 12 14"><use href="#ticon"/></svg><div class="t tr" style="left:63px;top:649px;">Zusatz</div><svg style="position:absolute;left:27px;top:672px;" width="9" height="9" viewBox="0 0 9 9"><use href="#plus"/></svg><svg style="position:absolute;left:45px;top:668px;" width="12" height="14" viewBox="0 0 12 14"><use href="#ticon"/></svg><div class="t tr" style="left:63px;top:667px;">Zusatz 1</div><svg style="position:absolute;left:27px;top:690px;" width="9" height="9" viewBox="0 0 9 9"><use href="#plus"/></svg><svg style="position:absolute;left:45px;top:686px;" width="12" height="14" viewBox="0 0 12 14"><use href="#ticon"/></svg><div class="t tr" style="left:63px;top:685px;">Zusatz 2</div><svg style="position:absolute;left:27px;top:708px;" width="9" height="9" viewBox="0 0 9 9"><use href="#plus"/></svg><svg style="position:absolute;left:45px;top:704px;" width="12" height="14" viewBox="0 0 12 14"><use href="#ticon"/></svg><div class="t tr" style="left:63px;top:703px;">Bohrungsart</div><svg style="position:absolute;left:27px;top:726px;" width="9" height="9" viewBox="0 0 9 9"><use href="#plus"/></svg><svg style="position:absolute;left:45px;top:722px;" width="12" height="14" viewBox="0 0 12 14"><use href="#ticon"/></svg><div class="t tr" style="left:63px;top:721px;">Einzug Bestand belegt</div><svg style="position:absolute;left:27px;top:744px;" width="9" height="9" viewBox="0 0 9 9"><use href="#plus"/></svg><svg style="position:absolute;left:45px;top:740px;" width="12" height="14" viewBox="0 0 12 14"><use href="#ticon"/></svg><div class="t tr" style="left:63px;top:739px;">Einzug Bestand DN50</div><svg style="position:absolute;left:27px;top:762px;" width="9" height="9" viewBox="0 0 9 9"><use href="#plus"/></svg><svg style="position:absolute;left:45px;top:758px;" width="12" height="14" viewBox="0 0 12 14"><use href="#ticon"/></svg><div class="t tr" style="left:63px;top:757px;">Verband</div><svg style="position:absolute;left:27px;top:780px;" width="9" height="9" viewBox="0 0 9 9"><use href="#plus"/></svg><svg style="position:absolute;left:45px;top:776px;" width="12" height="14" viewBox="0 0 12 14"><use href="#ticon"/></svg><div class="t tr" style="left:63px;top:775px;">Kugelmarker</div></div><div style="position:absolute;left:9px;top:865px;width:19px;height:18px;box-sizing:border-box;border:1px solid #cfcfcf;border-radius:4px;background:linear-gradient(#f4f4f4,#e4e4e4);"></div><svg style="position:absolute;left:0;top:0" width="1680" height="987"><path d="M14.5 874.0 L18.5 870.0 L22.5 874.0 M14.5 878.0 L18.5 874.0 L22.5 878.0" fill="none" stroke="#a8a8a8" stroke-width="1.5"/></svg><div style="position:absolute;left:33px;top:865px;width:19px;height:18px;box-sizing:border-box;border:1px solid #cfcfcf;border-radius:4px;background:linear-gradient(#f4f4f4,#e4e4e4);"></div><svg style="position:absolute;left:0;top:0" width="1680" height="987"><path d="M38.5 870.0 L42.5 874.0 L46.5 870.0 M38.5 874.0 L42.5 878.0 L46.5 874.0" fill="none" stroke="#a8a8a8" stroke-width="1.5"/></svg><div class="t s" style="left:12px;top:892px;letter-spacing:-0.1px;">Suche:</div><div style="position:absolute;left:159px;top:893px;width:1px;height:15px;background:#b4b4b4;"></div><svg style="position:absolute;left:167px;top:894px" width="9" height="15" viewBox="0 0 9 15"><path d="M8.5 0 V15 L0 7.5 Z" fill="#a0a0a0"/></svg><div class="t s" style="left:183px;top:892px;color:#6d6d6d;">Zurück</div><svg style="position:absolute;left:230px;top:894px" width="9" height="15" viewBox="0 0 9 15"><path d="M0.5 0 V15 L9 7.5 Z" fill="#a0a0a0"/></svg><div class="t s" style="left:244px;top:892px;color:#6d6d6d;">Weiter</div><div style="position:absolute;left:663px;top:892px;width:15px;height:14px;box-sizing:border-box;border:1px solid #cfcfcf;border-radius:4px;background:linear-gradient(#f4f4f4,#e4e4e4);"></div><svg style="position:absolute;left:0;top:0" width="1680" height="987"><path d="M666.5 899.0 L670.5 895.0 L674.5 899.0 M666.5 903.0 L670.5 899.0 L674.5 903.0" fill="none" stroke="#a8a8a8" stroke-width="1.5"/></svg><div style="position:absolute;left:686px;top:892px;width:15px;height:14px;box-sizing:border-box;border:1px solid #5a8ad0;border-radius:4px;background:#fff;"></div><svg style="position:absolute;left:0;top:0" width="1680" height="987"><path d="M689.5 895.0 L693.5 899.0 L697.5 895.0 M689.5 899.0 L693.5 903.0 L697.5 899.0" fill="none" stroke="#2a5caa" stroke-width="1.5"/></svg><svg style="position:absolute;left:1076px;top:104px" width="9" height="7" viewBox="0 0 9 7"><path d="M1 5.5 L4.5 2 L8 5.5" fill="none" stroke="#606060" stroke-width="2"/></svg><svg style="position:absolute;left:1076px;top:874px" width="9" height="7" viewBox="0 0 9 7"><path d="M1 1.5 L4.5 5 L8 1.5" fill="none" stroke="#606060" stroke-width="2"/></svg><div style="position:absolute;left:1102px;top:72px;width:551px;height:161px;background:#f3f6fb;"></div><svg style="position:absolute;left:1106px;top:78px" width="10" height="7" viewBox="0 0 10 7"><path d="M1 1 L5 5 L9 1" fill="none" stroke="#404040" stroke-width="1.6"/></svg><div class="t" style="left:1127px;top:73px;font-weight:bold;">1. Objektklasse</div><div style="position:absolute;left:1123px;top:89px;width:234px;height:15px;background:#fff;"></div><div style="position:absolute;left:1359px;top:89px;width:294px;height:15px;background:#fff;"></div><div class="t s" style="left:1126px;top:89px;color:#7a7a7a;">Objektklasse</div><div class="t s" style="left:1362px;top:89px;color:#7a7a7a;">Trasse</div><div style="position:absolute;left:1123px;top:105px;width:234px;height:15px;background:#fff;"></div><div style="position:absolute;left:1359px;top:105px;width:294px;height:15px;background:#fff;"></div><div class="t s" style="left:1126px;top:105px;color:#7a7a7a;">Interner Name</div><div class="t s" style="left:1362px;top:105px;color:#7a7a7a;">cis_lin_trasse</div><svg style="position:absolute;left:1106px;top:126px" width="10" height="7" viewBox="0 0 10 7"><path d="M1 1 L5 5 L9 1" fill="none" stroke="#404040" stroke-width="1.6"/></svg><div class="t" style="left:1127px;top:121px;font-weight:bold;">2. Attribut</div><div style="position:absolute;left:1123px;top:137px;width:234px;height:15px;background:#fff;"></div><div style="position:absolute;left:1359px;top:137px;width:294px;height:15px;background:#fff;"></div><div class="t s" style="left:1126px;top:137px;color:#000;">Attribut</div><div class="t" style="left:1362px;top:137px;font-weight:bold;">Graben länge</div><div style="position:absolute;left:1123px;top:153px;width:234px;height:15px;background:#fff;"></div><div style="position:absolute;left:1359px;top:153px;width:294px;height:15px;background:#fff;"></div><div class="t s" style="left:1126px;top:153px;color:#000;">Interner Name</div><div class="t" style="left:1362px;top:153px;font-weight:bold;">graben_laengeut</div><svg style="position:absolute;left:1106px;top:174px" width="10" height="7" viewBox="0 0 10 7"><path d="M1 1 L5 5 L9 1" fill="none" stroke="#404040" stroke-width="1.6"/></svg><div class="t" style="left:1127px;top:169px;font-weight:bold;">3. Gruppierung</div><div style="position:absolute;left:1123px;top:185px;width:234px;height:15px;background:#0078d7;"></div><div style="position:absolute;left:1359px;top:185px;width:294px;height:15px;background:#fff;"></div><div class="t s" style="left:1126px;top:185px;color:#fff;">Gruppierungsattribut</div><svg style="position:absolute;left:1106px;top:206px" width="10" height="7" viewBox="0 0 10 7"><path d="M1 1 L5 5 L9 1" fill="none" stroke="#404040" stroke-width="1.6"/></svg><div class="t" style="left:1127px;top:201px;font-weight:bold;">4. Stützpunkt</div><div style="position:absolute;left:1123px;top:217px;width:234px;height:15px;background:#fff;"></div><div style="position:absolute;left:1359px;top:217px;width:294px;height:15px;background:#fff;"></div><div class="t s" style="left:1126px;top:217px;color:#000;">Stützpunkt</div><div class="t" style="left:1362px;top:217px;font-weight:bold;">nicht gesetzt</div><div style="position:absolute;left:1657px;top:52px;width:22px;height:78px;background:#f0f0f0;"></div><div style="position:absolute;left:1657px;top:51px;width:22px;height:1px;background:#fff;"></div><div style="position:absolute;left:1678px;top:53px;width:1px;height:77px;background:#808080;"></div><div style="position:absolute;left:1679px;top:53px;width:1px;height:77px;background:#b0b0b0;"></div><div class="t s" style="left:1662px;top:57px;writing-mode:vertical-rl;letter-spacing:-0.1px;">Eigenschaften</div><div style="position:absolute;left:1658px;top:131px;width:20px;height:60px;box-sizing:border-box;border:1px solid #a0a0a0;border-left:none;border-right:2px solid #8a8a8a;border-radius:0 3px 3px 0;background:#f0f0f0;"></div><div class="t s" style="left:1662px;top:133px;writing-mode:vertical-rl;letter-spacing:-0.1px;">Darstellung</div><div style="position:absolute;left:1658px;top:193px;width:20px;height:73px;box-sizing:border-box;border:1px solid #a0a0a0;border-left:none;border-right:2px solid #8a8a8a;border-radius:0 3px 3px 0;background:#f0f0f0;"></div><div class="t s" style="left:1662px;top:195px;writing-mode:vertical-rl;letter-spacing:-0.1px;">Schema(beta)</div></body></html>
